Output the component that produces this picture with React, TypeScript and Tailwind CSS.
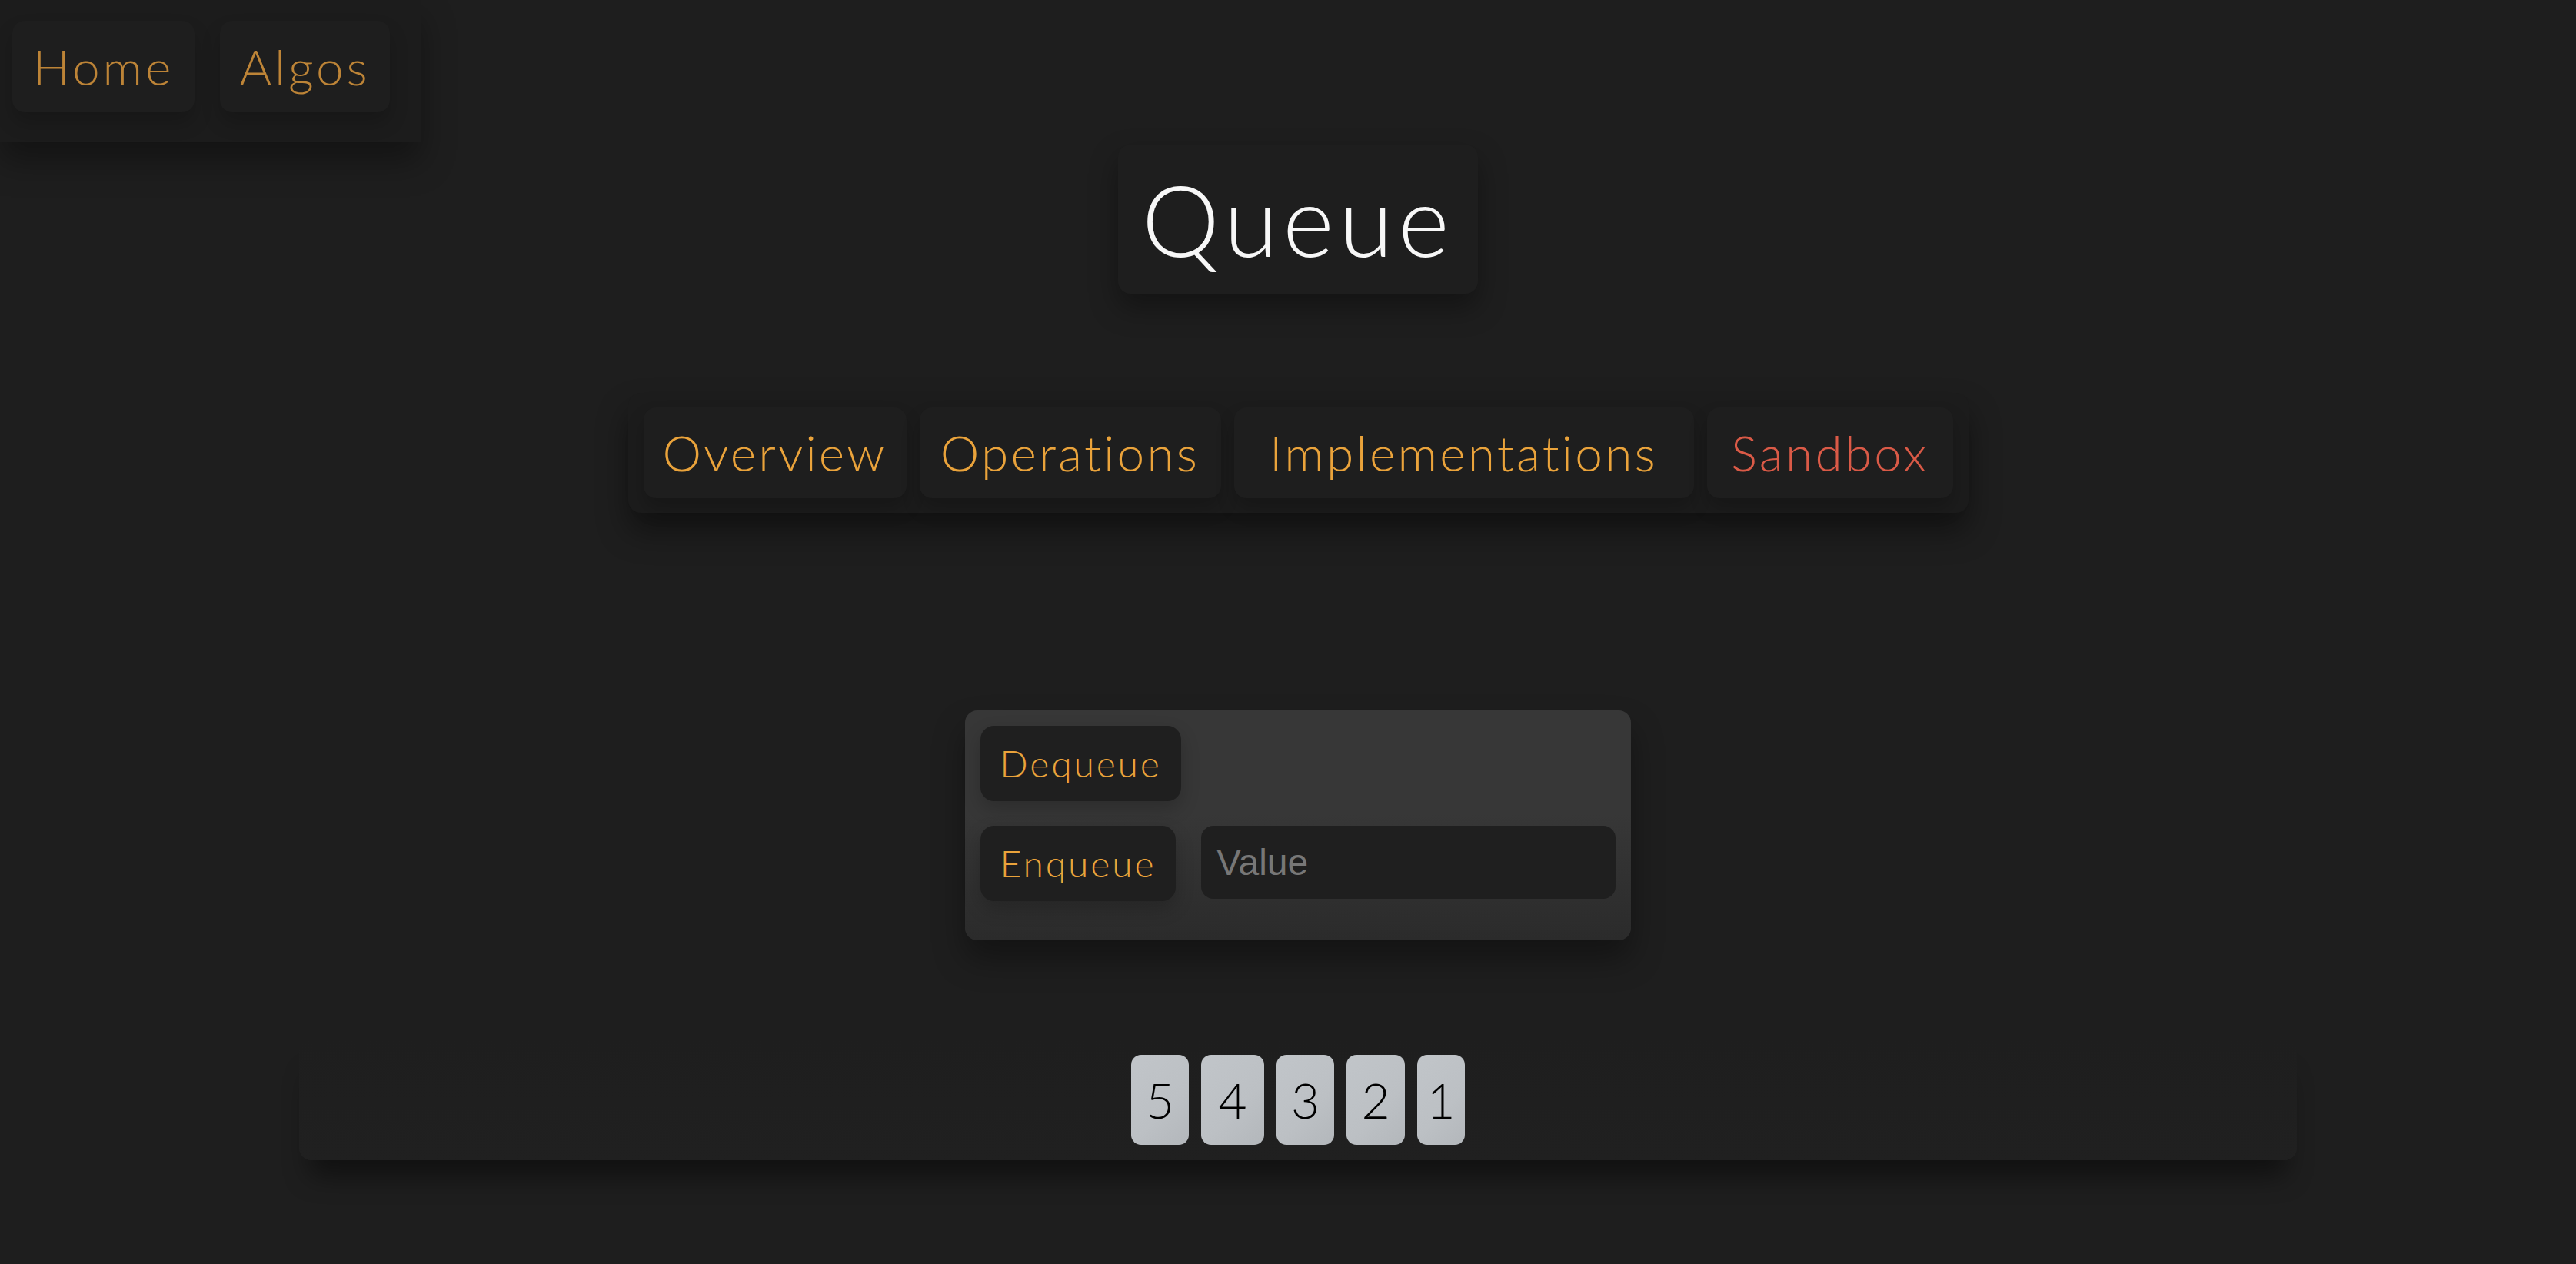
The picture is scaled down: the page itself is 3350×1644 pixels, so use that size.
import React from 'react';

const navLinks = [
  { label: 'Home', w: 'w-[237px]' },
  { label: 'Algos', w: 'w-[221px]' },
];

const tabs = [
  { label: 'Overview', w: 'w-[342px]', active: false },
  { label: 'Operations', w: 'w-[392px]', active: false },
  { label: 'Implementations', w: 'w-[598px]', active: false },
  { label: 'Sandbox', w: 'w-[320px]', active: true },
];

// card widths follow the glyph widths in the original
const queue = [
  { n: 5, w: 'w-[75px]' },
  { n: 4, w: 'w-[82px]' },
  { n: 3, w: 'w-[75px]' },
  { n: 2, w: 'w-[76px]' },
  { n: 1, w: 'w-[62px]' },
];

export default function App() {
  return (
    <div className="min-h-screen bg-[#1e1e1e] font-['Lato','Noto_Sans',sans-serif] font-light">
      {/* Top nav */}
      <nav className="flex h-[185px] w-[547px] items-start gap-[33px] bg-[#1c1c1c] pl-[16px] pt-[27px] shadow-[0_24px_40px_rgba(0,0,0,0.35)]">
        {navLinks.map((l) => (
          <a
            key={l.label}
            href="#"
            className={`${l.w} flex h-[119px] items-center justify-center rounded-[16px] bg-[#1e1e1e] text-[64px] leading-[78px] tracking-[0.06em] text-[#bd8437] shadow-[0_14px_24px_rgba(0,0,0,0.18)]`}
          >
            {l.label}
          </a>
        ))}
      </nav>

      <main className="flex flex-col items-center pl-[26px]">
        {/* Title */}
        <div className="mt-[3px] flex h-[194px] w-[468px] items-center justify-center rounded-[16px] bg-[#1e1e1e] shadow-[0_18px_36px_rgba(0,0,0,0.35)]">
          <h1 className="text-[128px] leading-[156px] font-light tracking-[0.05em] text-[#f7f7f7]">Queue</h1>
        </div>

        {/* Tabs */}
        <div className="mt-[129px] flex h-[156px] items-center gap-[17px] rounded-[16px] bg-[#1c1c1c] px-[20px] shadow-[0_24px_40px_rgba(0,0,0,0.4)]">
          {tabs.map((t) => (
            <button
              key={t.label}
              className={`${t.w} flex h-[118px] items-center justify-center rounded-[16px] bg-[#1e1e1e] text-[64px] leading-[78px] tracking-[0.05em] shadow-[0_14px_24px_rgba(0,0,0,0.2)] ${
                t.active ? 'text-[#da5a47]' : 'text-[#eaa33b]'
              }`}
            >
              {t.label}
            </button>
          ))}
        </div>

        {/* Sandbox controls */}
        <div className="mt-[257px] flex h-[299px] w-[866px] flex-col gap-[32px] rounded-[16px] bg-[linear-gradient(to_bottom,#373737_45%,#2b2b2b_100%)] px-[20px] pt-[20px] shadow-[0_24px_40px_rgba(0,0,0,0.35)]">
          <div className="flex">
            <button className="flex h-[98px] w-[261px] shrink-0 items-center justify-center rounded-[18px] bg-[#1f1f1f] text-[48px] leading-[60px] tracking-[0.06em] text-[#eaa33b] shadow-[0_10px_24px_rgba(0,0,0,0.2)]">
              Dequeue
            </button>
          </div>
          <div className="flex items-start gap-[33px]">
            <button className="flex h-[98px] w-[254px] shrink-0 items-center justify-center rounded-[18px] bg-[#1f1f1f] text-[48px] leading-[60px] tracking-[0.06em] text-[#eaa33b] shadow-[0_10px_24px_rgba(0,0,0,0.2)]">
              Enqueue
            </button>
            <input
              placeholder="Value"
              className="h-[95px] min-w-0 flex-1 rounded-[16px] bg-[#1f1f1f] pl-[20px] font-['Liberation_Sans',Arial,sans-serif] text-[48px] font-normal text-[#cfcfcf] outline-none placeholder:text-[#777777]"
            />
          </div>
        </div>

        {/* Queue display */}
        <div className="mt-[129px] flex h-[157px] w-[2598px] items-end justify-center gap-[16px] rounded-[16px] bg-[linear-gradient(to_bottom,#1e1e1e,#202020)] pb-[20px] shadow-[0_34px_34px_-14px_rgba(0,0,0,0.45)]">
          {queue.map((c) => (
            <div
              key={c.n}
              className={`${c.w} flex h-[117px] items-center justify-center rounded-[13px] bg-[linear-gradient(135deg,#c1c5c9_0%,#bcc0c4_60%,#b3b7bb_100%)] text-[64px] leading-none text-black`}
            >
              {c.n}
            </div>
          ))}
        </div>
      </main>
    </div>
  );
}
